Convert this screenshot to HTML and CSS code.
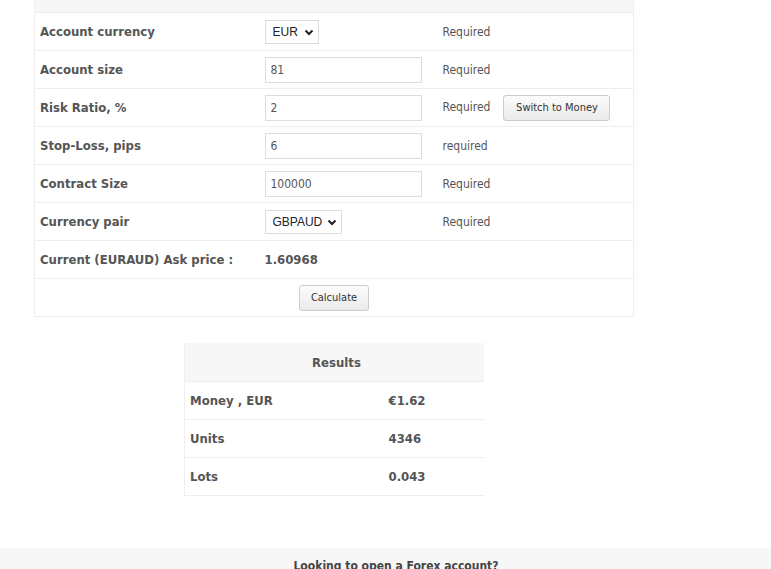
FILE: index.html
```html
<!DOCTYPE html>
<html>
<head>
<meta charset="utf-8">
<link rel="stylesheet" href="styles.css">
</head>
<body>
<div class="wrap">
  <table class="calc">
    <thead><tr><th colspan="3"></th></tr></thead>
    <tbody>
      <tr>
        <td class="lbl">Account currency</td>
        <td><span class="sel sel-eur"><select><option>EUR</option></select><svg class="chev" width="10" height="7" viewBox="0 0 10 7"><path d="M1.5 1.5 L5 5 L8.5 1.5" fill="none" stroke="#222" stroke-width="2"/></svg></span></td>
        <td class="req">Required</td>
      </tr>
      <tr>
        <td class="lbl">Account size</td>
        <td><input class="inp" type="text" value="81"></td>
        <td class="req">Required</td>
      </tr>
      <tr>
        <td class="lbl">Risk Ratio, %</td>
        <td><input class="inp" type="text" value="2"></td>
        <td class="req"><div class="reqrow"><span>Required</span><button class="btn btn-switch">Switch to Money</button></div></td>
      </tr>
      <tr>
        <td class="lbl">Stop-Loss, pips</td>
        <td><input class="inp" type="text" value="6"></td>
        <td class="req">required</td>
      </tr>
      <tr>
        <td class="lbl">Contract Size</td>
        <td><input class="inp" type="text" value="100000"></td>
        <td class="req">Required</td>
      </tr>
      <tr>
        <td class="lbl">Currency pair</td>
        <td><span class="sel sel-pair"><select><option>GBPAUD</option></select><svg class="chev" width="10" height="7" viewBox="0 0 10 7"><path d="M1.5 1.5 L5 5 L8.5 1.5" fill="none" stroke="#222" stroke-width="2"/></svg></span></td>
        <td class="req">Required</td>
      </tr>
      <tr>
        <td class="lbl">Current (EURAUD) Ask price :</td>
        <td class="lbl">1.60968</td>
        <td></td>
      </tr>
      <tr>
        <td colspan="3" class="center"><button class="btn btn-calc">Calculate</button></td>
      </tr>
    </tbody>
  </table>

  <table class="results">
    <thead><tr><th colspan="2">Results</th></tr></thead>
    <tbody>
      <tr><td class="rl">Money , EUR</td><td class="rv">€1.62</td></tr>
      <tr><td class="rl">Units</td><td class="rv">4346</td></tr>
      <tr><td class="rl">Lots</td><td class="rv">0.043</td></tr>
    </tbody>
  </table>
</div>
<div class="footer">Looking to open a Forex account?</div>
</body>
</html>
```

FILE: styles.css
```css
html, body {
  margin: 0;
  padding: 0;
  background: #fff;
}
body {
  font-family: "DejaVu Sans Condensed", "DejaVu Sans", sans-serif;
  color: #555;
}
.wrap {
  padding-left: 34px;
  padding-bottom: 52px;
}
table {
  border-collapse: collapse;
  border-spacing: 0;
}
.calc {
  width: 600px;
  border-left: 1px solid #eee;
  border-right: 1px solid #eee;
}
.calc thead th {
  height: 12px;
  padding: 0;
  background: #f7f7f7;
}
.calc td {
  height: 38px;
  padding: 0 5px;
  border-top: 1px solid #eee;
  border-bottom: 1px solid #eee;
  vertical-align: middle;
  box-sizing: border-box;
}
.calc td:nth-child(1) { width: 225px; }
.calc td:nth-child(2) { width: 178px; }
.lbl {
  font-weight: bold;
  font-size: 13px;
  color: #555;
}
.req {
  font-size: 12px;
  color: #555;
}
.reqrow {
  display: flex;
  align-items: center;
  gap: 13px;
}
.reqrow span {
  position: relative;
  top: -1px;
}
.center {
  text-align: center;
}
.inp {
  display: block;
  box-sizing: border-box;
  width: 157px;
  height: 26px;
  border: 1px solid #ddd;
  padding: 0 5px;
  font-family: "DejaVu Sans Condensed", "DejaVu Sans", sans-serif;
  font-size: 12px;
  color: #555;
  background: #fff;
  margin: 0;
}
.sel {
  display: inline-block;
  position: relative;
  vertical-align: middle;
}
.sel select {
  -webkit-appearance: none;
  appearance: none;
  display: block;
  box-sizing: border-box;
  height: 24px;
  border: 1px solid #ddd;
  border-radius: 0;
  background: #fff;
  color: #222;
  font-family: "Liberation Sans", Arial, sans-serif;
  font-size: 12px;
  padding: 0 0 0 7px;
  margin: 0;
}
.sel-eur select { width: 54px; }
.sel-pair select { width: 77px; }
.chev {
  position: absolute;
  top: 9px;
  right: 5px;
  pointer-events: none;
}
.btn {
  box-sizing: border-box;
  height: 26px;
  border: 1px solid #ccc;
  border-radius: 3px;
  background: linear-gradient(#fcfcfc, #eaeaea);
  color: #333;
  font-family: "DejaVu Sans Condensed", "DejaVu Sans", sans-serif;
  font-size: 11px;
  padding: 0;
  margin: 0;
}
.btn-switch { width: 107px; }
.btn-calc { width: 70px; vertical-align: middle; }
.results {
  width: 300px;
  margin-top: 26px;
  margin-left: 150px;
  border-left: 1px solid #eee;
}
.results th {
  height: 38px;
  background: #f7f7f7;
  font-size: 13px;
  font-weight: bold;
  color: #555;
  padding: 0 0 0 4px;
}
.results td {
  height: 38px;
  box-sizing: border-box;
  padding: 0 5px;
  border-top: 1px solid #eee;
  border-bottom: 1px solid #eee;
  font-size: 13px;
  font-weight: bold;
  color: #555;
}
.results td.rl { width: 199px; }
.footer {
  background: #f7f7f7;
  text-align: center;
  font-size: 12px;
  font-weight: bold;
  color: #444;
  padding-top: 11px;
  padding-left: 21px;
  height: 60px;
}
```
